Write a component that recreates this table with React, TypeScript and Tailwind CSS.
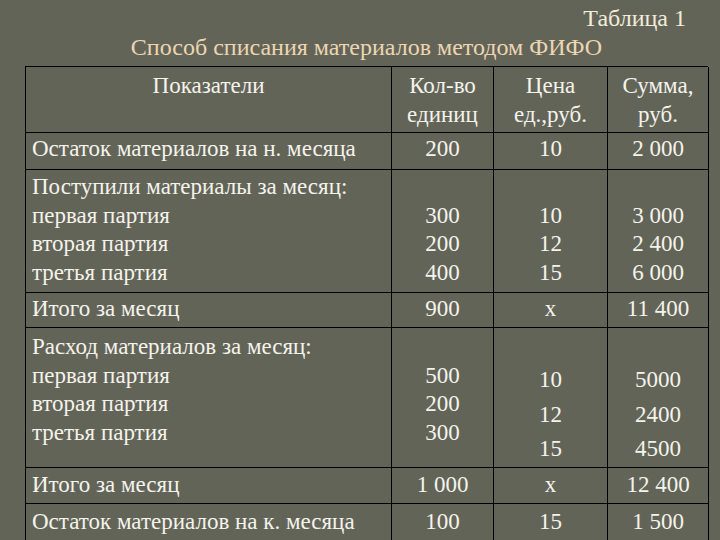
import React from 'react'

// FIFO write-off table (slide)
type Row = {
  height: string
  label: string[]
  qty: string[]
  price: string[]
  sum: string[]
  pad: string
  numPad?: string
  numLeading?: string
}

const rows: Row[] = [
  { height: 'h-[37px]', label: ['Остаток материалов на н. месяца'], qty: ['200'], price: ['10'], sum: ['2 000'], pad: 'pt-[2px]' },
  {
    height: 'h-[123px]',
    label: ['Поступили материалы за месяц:', 'первая партия', 'вторая партия', 'третья партия'],
    qty: ['\u00a0', '300', '200', '400'],
    price: ['\u00a0', '10', '12', '15'],
    sum: ['\u00a0', '3 000', '2 400', '6 000'],
    pad: 'pt-[3px]',
  },
  { height: 'h-[35px]', label: ['Итого за месяц'], qty: ['900'], price: ['x'], sum: ['11 400'], pad: 'pt-[2px]' },
  {
    height: 'h-[140px]',
    label: ['Расход материалов за месяц:', 'первая партия', 'вторая партия', 'третья партия'],
    qty: ['\u00a0', '500', '200', '300'],
    price: ['10', '12', '15'],
    sum: ['5000', '2400', '4500'],
    pad: 'pt-[5px]',
    numPad: 'pt-[35px]',
    numLeading: 'leading-[34.5px]',
  },
  { height: 'h-[36px]', label: ['Итого за месяц'], qty: ['1 000'], price: ['x'], sum: ['12 400'], pad: 'pt-[3px]' },
  { height: 'h-[40px]', label: ['Остаток материалов на к. месяца'], qty: ['100'], price: ['15'], sum: ['1 500'], pad: 'pt-[4px]' },
]

function Lines({ items, className }: { items: string[]; className?: string }) {
  return (
    <div className={className}>
      {items.map((t, i) => (
        <div key={i} className="whitespace-nowrap">
          {t}
        </div>
      ))}
    </div>
  )
}

export default function App() {
  return (
    <div className="w-[720px] h-[540px] overflow-hidden bg-[#636458] text-[#f4f3ec] font-['Liberation_Serif']">
      <div className="ml-[25px] w-[683px]">
        <div className="pt-[4px] text-[24px] leading-[29px]">
          <div className="text-right pr-[22px] text-[#f2ecd9]">Таблица 1</div>
          <div className="text-center text-[#ecd6b2]">Способ списания материалов методом ФИФО</div>
        </div>

        <div className="mt-[4px] border-l border-t border-black text-[23px] leading-[28.5px]">
          {/* header */}
          <div className="grid grid-cols-[366px_102px_114px_101px] h-[66px]">
            <div className="border-r border-b border-black text-center pt-[4px] leading-[29px]">Показатели</div>
            <Lines items={['Кол-во', 'единиц']} className="border-r border-b border-black text-center pt-[4px] leading-[29px]" />
            <Lines items={['Цена', 'ед.,руб.']} className="border-r border-b border-black text-center pt-[4px] leading-[29px]" />
            <Lines items={['Сумма,', 'руб.']} className="border-r border-b border-black text-center pt-[4px] leading-[29px]" />
          </div>

          {rows.map((r, i) => (
            <div key={i} className={`grid grid-cols-[366px_102px_114px_101px] ${r.height}`}>
              <Lines items={r.label} className={`border-r border-b border-black pl-[6px] ${r.pad}`} />
              <Lines items={r.qty} className={`border-r border-b border-black text-center ${r.pad}`} />
              <Lines items={r.price} className={`border-r border-b border-black text-center ${r.numPad ?? r.pad} ${r.numLeading ?? ''}`} />
              <Lines items={r.sum} className={`border-r border-b border-black text-center ${r.numPad ?? r.pad} ${r.numLeading ?? ''}`} />
            </div>
          ))}
        </div>
      </div>
    </div>
  )
}
